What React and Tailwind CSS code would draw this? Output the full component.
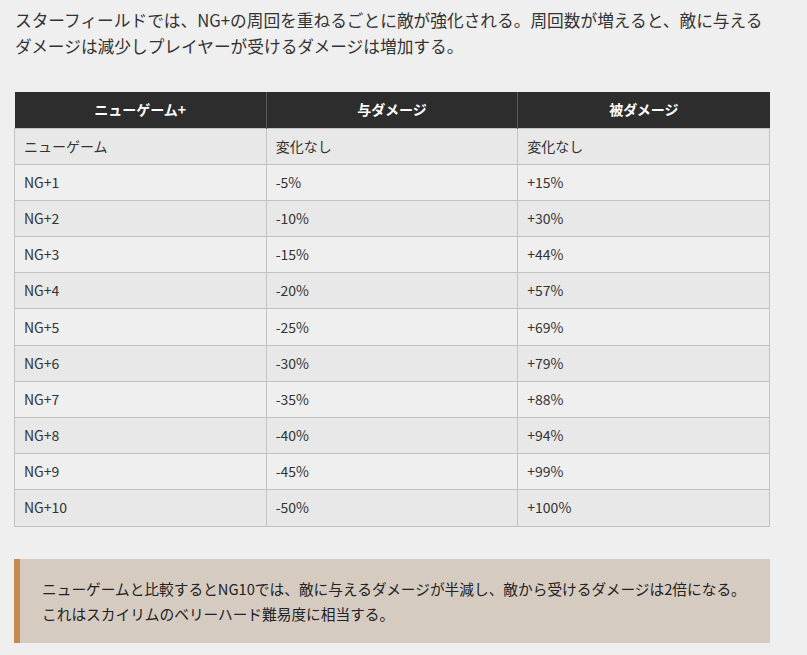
import React from "react";

const rows = [
  ["ニューゲーム", "変化なし", "変化なし"],
  ["NG+1", "-5%", "+15%"],
  ["NG+2", "-10%", "+30%"],
  ["NG+3", "-15%", "+44%"],
  ["NG+4", "-20%", "+57%"],
  ["NG+5", "-25%", "+69%"],
  ["NG+6", "-30%", "+79%"],
  ["NG+7", "-35%", "+88%"],
  ["NG+8", "-40%", "+94%"],
  ["NG+9", "-45%", "+99%"],
  ["NG+10", "-50%", "+100%"],
];

export default function App() {
  return (
    <div
      className="min-h-[655px] w-[807px] bg-[#efefef] text-[#333333] px-[14px] pt-[7px]"
      style={{ fontFamily: '"Noto Sans CJK JP", "Noto Sans", sans-serif' }}
    >
      <p className="text-[16.7px] leading-[26px] whitespace-nowrap pl-[1px]">
        スターフィールドでは、NG+の周回を重ねるごとに敵が強化される。周回数が増えると、敵に与える
        <br />
        ダメージは減少しプレイヤーが受けるダメージは増加する。
      </p>

      <table className="mt-[33px] w-[756px] border-collapse table-fixed text-[14px]">
        <thead>
          <tr className="bg-[#2d2d2d] text-white">
            <th className="h-[36px] p-0 font-bold text-center border-r border-[#5a5a5a]">ニューゲーム+</th>
            <th className="h-[36px] p-0 font-bold text-center border-r border-[#5a5a5a]">与ダメージ</th>
            <th className="h-[36px] p-0 font-bold text-center">被ダメージ</th>
          </tr>
        </thead>
        <tbody>
          {rows.map((r, i) => (
            <tr key={i} className={i % 2 === 0 ? "bg-[#e8e8e8]" : "bg-[#efefef]"}>
              {r.map((c, j) => (
                <td
                  key={j}
                  className="h-[36.2px] py-0 px-[9px] border border-[#c2c2c2] text-left"
                >
                  {c}
                </td>
              ))}
            </tr>
          ))}
        </tbody>
      </table>

      <div className="mt-[32px] w-[756px] flex bg-[#d5cbc1] border-l-[6px] border-[#c68a4f] pl-[22px] py-[17px] text-[14.7px] leading-[25px] text-[#222222]">
        <p className="whitespace-nowrap">
          ニューゲームと比較するとNG10では、敵に与えるダメージが半減し、敵から受けるダメージは2倍になる。
          <br />
          これはスカイリムのベリーハード難易度に相当する。
        </p>
      </div>
    </div>
  );
}
